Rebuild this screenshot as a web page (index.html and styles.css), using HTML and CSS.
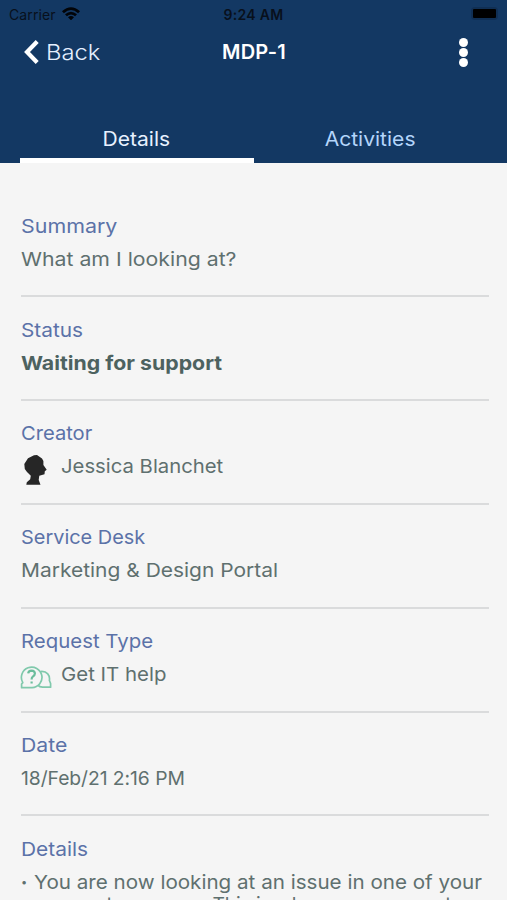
FILE: index.html
```
<!DOCTYPE html>
<html lang="en">
<head>
<meta charset="utf-8">
<title>MDP-1</title>
<link rel="stylesheet" href="styles.css">
</head>
<body>
<header class="header">
  <div class="status-bar">
    <div class="carrier"><span>Carrier</span>
      <svg class="wifi" viewBox="0 0 18 13"><path d="M0 4.2Q9-3.6 18 4.2L16.1 6.2Q9 0 1.9 6.2ZM3 7.3Q9 2 15 7.3L13.1 9.3Q9 5.8 4.9 9.3ZM6 10.3Q9 7.8 12 10.3L9 13.3Z"/></svg>
    </div>
    <div class="time"><span>9:24 AM</span></div>
    <div class="battery"><i></i></div>
  </div>
  <nav class="nav">
    <div class="back">
      <svg class="chevron" viewBox="0 0 16 26"><path d="M14.2 2.5 4 13 14.2 23.5"/></svg>
      <span class="back-label">Back</span>
    </div>
    <h1 class="title"><span>MDP-1</span></h1>
    <div class="more"><i></i><i></i><i></i></div>
  </nav>
  <div class="tabs">
    <div class="tab active"><span>Details</span></div>
    <div class="tab"><span>Activities</span></div>
  </div>
</header>
<main class="fields">
  <section class="field"><h2><span class="l-summary">Summary</span></h2><p><span class="v-summary">What am I looking at?</span></p></section>
  <section class="field"><h2><span class="l-status">Status</span></h2><p class="bold"><span class="v-status">Waiting for support</span></p></section>
  <section class="field"><h2><span class="l-creator">Creator</span></h2>
    <p class="with-icon"><svg class="avatar" viewBox="0 0 32 32"><path d="M4.3 10 8 4.2 14 1.2 17 1 22 4.5 23.4 7 23.4 11 26.7 15.8 24.8 17.2 24.5 20.2 19.3 21.7 18.7 26 20.5 30.7H6.3L6.8 28.2 10.2 25.3 10.8 21.8 7 18 4.8 15Z"/></svg><span class="v-creator">Jessica Blanchet</span></p></section>
  <section class="field"><h2><span class="l-desk">Service Desk</span></h2><p><span class="v-desk">Marketing &amp; Design Portal</span></p></section>
  <section class="field"><h2><span class="l-type">Request Type</span></h2>
    <p class="with-icon"><svg class="chat" viewBox="0 0 32 32"><path d="M1.6 25.7V22L2.8 20.6A10.3 10.3 0 1 1 12 25.7ZM20.8 9.5C27 9 30.2 13.2 29.4 18.5L30.6 21.5V25.2H22.5Q19.5 25.2 18 23.4"/><path class="mark" d="M8.2 11.4Q8.4 8.6 11.6 8.6 14.9 8.8 14.9 11.6 14.9 13.4 12.8 14.6 11.6 15.4 11.6 17.6M11.6 19.6V21.6"/></svg><span class="v-type">Get IT help</span></p></section>
  <section class="field"><h2><span class="l-date">Date</span></h2><p><span class="v-date">18/Feb/21 2:16 PM</span></p></section>
  <section class="field last"><h2><span class="l-details">Details</span></h2>
    <ul><li><span class="v-line1">You are now looking at an issue in one of your</span><br><span class="v-line2">request queues. </span><span class="v-line3">This is where your requests</span></li></ul></section>
</main>
</body>
</html>
```
FILE: styles.css
```
* { box-sizing: border-box; margin: 0; padding: 0; }
body { height: 900px; overflow: hidden; background: #f5f5f5; color: #5f706f; font-family: Inter, sans-serif; }
span { white-space: pre; }
.header { height: 163px; background: #133863; color: #fff; display: flex; flex-direction: column; }
.status-bar { height: 28px; display: grid; grid-template-columns: 1fr 1fr 1fr; align-items: center; color: #08101c; font-size: 14px; padding: 0 9px 0 9px; }
.carrier { display: flex; align-items: center; gap: 6px; letter-spacing: .1px; }
.wifi { width: 18px; height: 13px; fill: #020408; margin-top: -2px; }
.time { text-align: center; font-weight: 600; font-size: 14px; letter-spacing: .3px; }
.battery { justify-self: end; width: 27px; height: 13px; padding: 2px; border-radius: 4px; background: #102f54; margin-top: -2px; }
.battery i { display: block; width: 23px; height: 9px; border-radius: 1px; background: #000; }
.nav { height: 48px; display: grid; grid-template-columns: 1fr auto 1fr; align-items: center; padding: 0 39px 0 23px; }
.back { display: flex; align-items: center; gap: 7px; }
.chevron { width: 16px; height: 26px; fill: none; stroke: #fff; stroke-width: 4.2; }
.back-label { font-size: 22px; font-weight: 300; color: #e5efff; transform: scaleX(1.08); transform-origin: 0 50%; }
.title { font-size: 20px; font-weight: 600; padding-left: 17px; letter-spacing: .2px; }
.more { justify-self: end; display: flex; flex-direction: column; gap: 1px; }
.more i { width: 9px; height: 9px; border-radius: 50%; background: #fff; }
.tabs { display: flex; margin: 39px 20px 0; height: 48px; }
.tab { flex: 1; text-align: center; font-size: 19.5px; line-height: 49px; color: #b4d5fb; }
.tab span { display: inline-block; transform: scaleX(1.08); }
.tab.active { color: #e8f1ff; border-bottom: 5px solid #fff; }
.fields { padding: 30.4px 18px 0 21px; font-size: 19.3px; }
.field { height: 103.85px; padding-top: 16.3px; border-bottom: 2px solid #dadbdc; }
.field span { display: inline-block; transform-origin: 0 50%; }
h2 { font-size: inherit; font-weight: 400; line-height: 33px; color: #5b72a8; }
p, li { line-height: 33px; height: 33px; }
.bold { font-weight: 700; color: #4d6260; }
.with-icon { display: flex; }
.avatar, .chat { width: 32px; height: 32px; flex: none; margin: 4px 9px 0 -1px; }
.avatar { fill: #262626; }
.chat { fill: none; stroke: #80c9ac; stroke-width: 1.7; stroke-linejoin: round; }
.mark { stroke-width: 2.2; stroke: #6bbd9c; }
.last { border: 0; height: auto; }
ul { list-style: none; }
li { padding-left: 13px; position: relative; line-height: 22px; padding-top: 5px; }
li::before { content: "•"; position: absolute; left: 0; font-size: 11px; }
.l-summary { transform: scaleX(1.11); }
.v-summary { transform: scaleX(1.103); }
.l-status { transform: scaleX(1.08); }
.v-status { transform: scaleX(1.104); }
.l-creator { transform: scaleX(1.045); }
.v-creator { transform: scaleX(1.052); }
.l-desk { transform: scaleX(1.033); }
.v-desk { transform: scaleX(1.087); }
.l-type { transform: scaleX(1.058); }
.v-type { transform: scaleX(1.06); }
.l-date { transform: scaleX(1.1); }
.v-date { letter-spacing: -.05px; }
.l-details { transform: scaleX(1.085); }
.v-line1 { transform: scaleX(1.069); }
.v-line2 { letter-spacing: 1.6px; }
.v-line3 { letter-spacing: -.1px; }
```
